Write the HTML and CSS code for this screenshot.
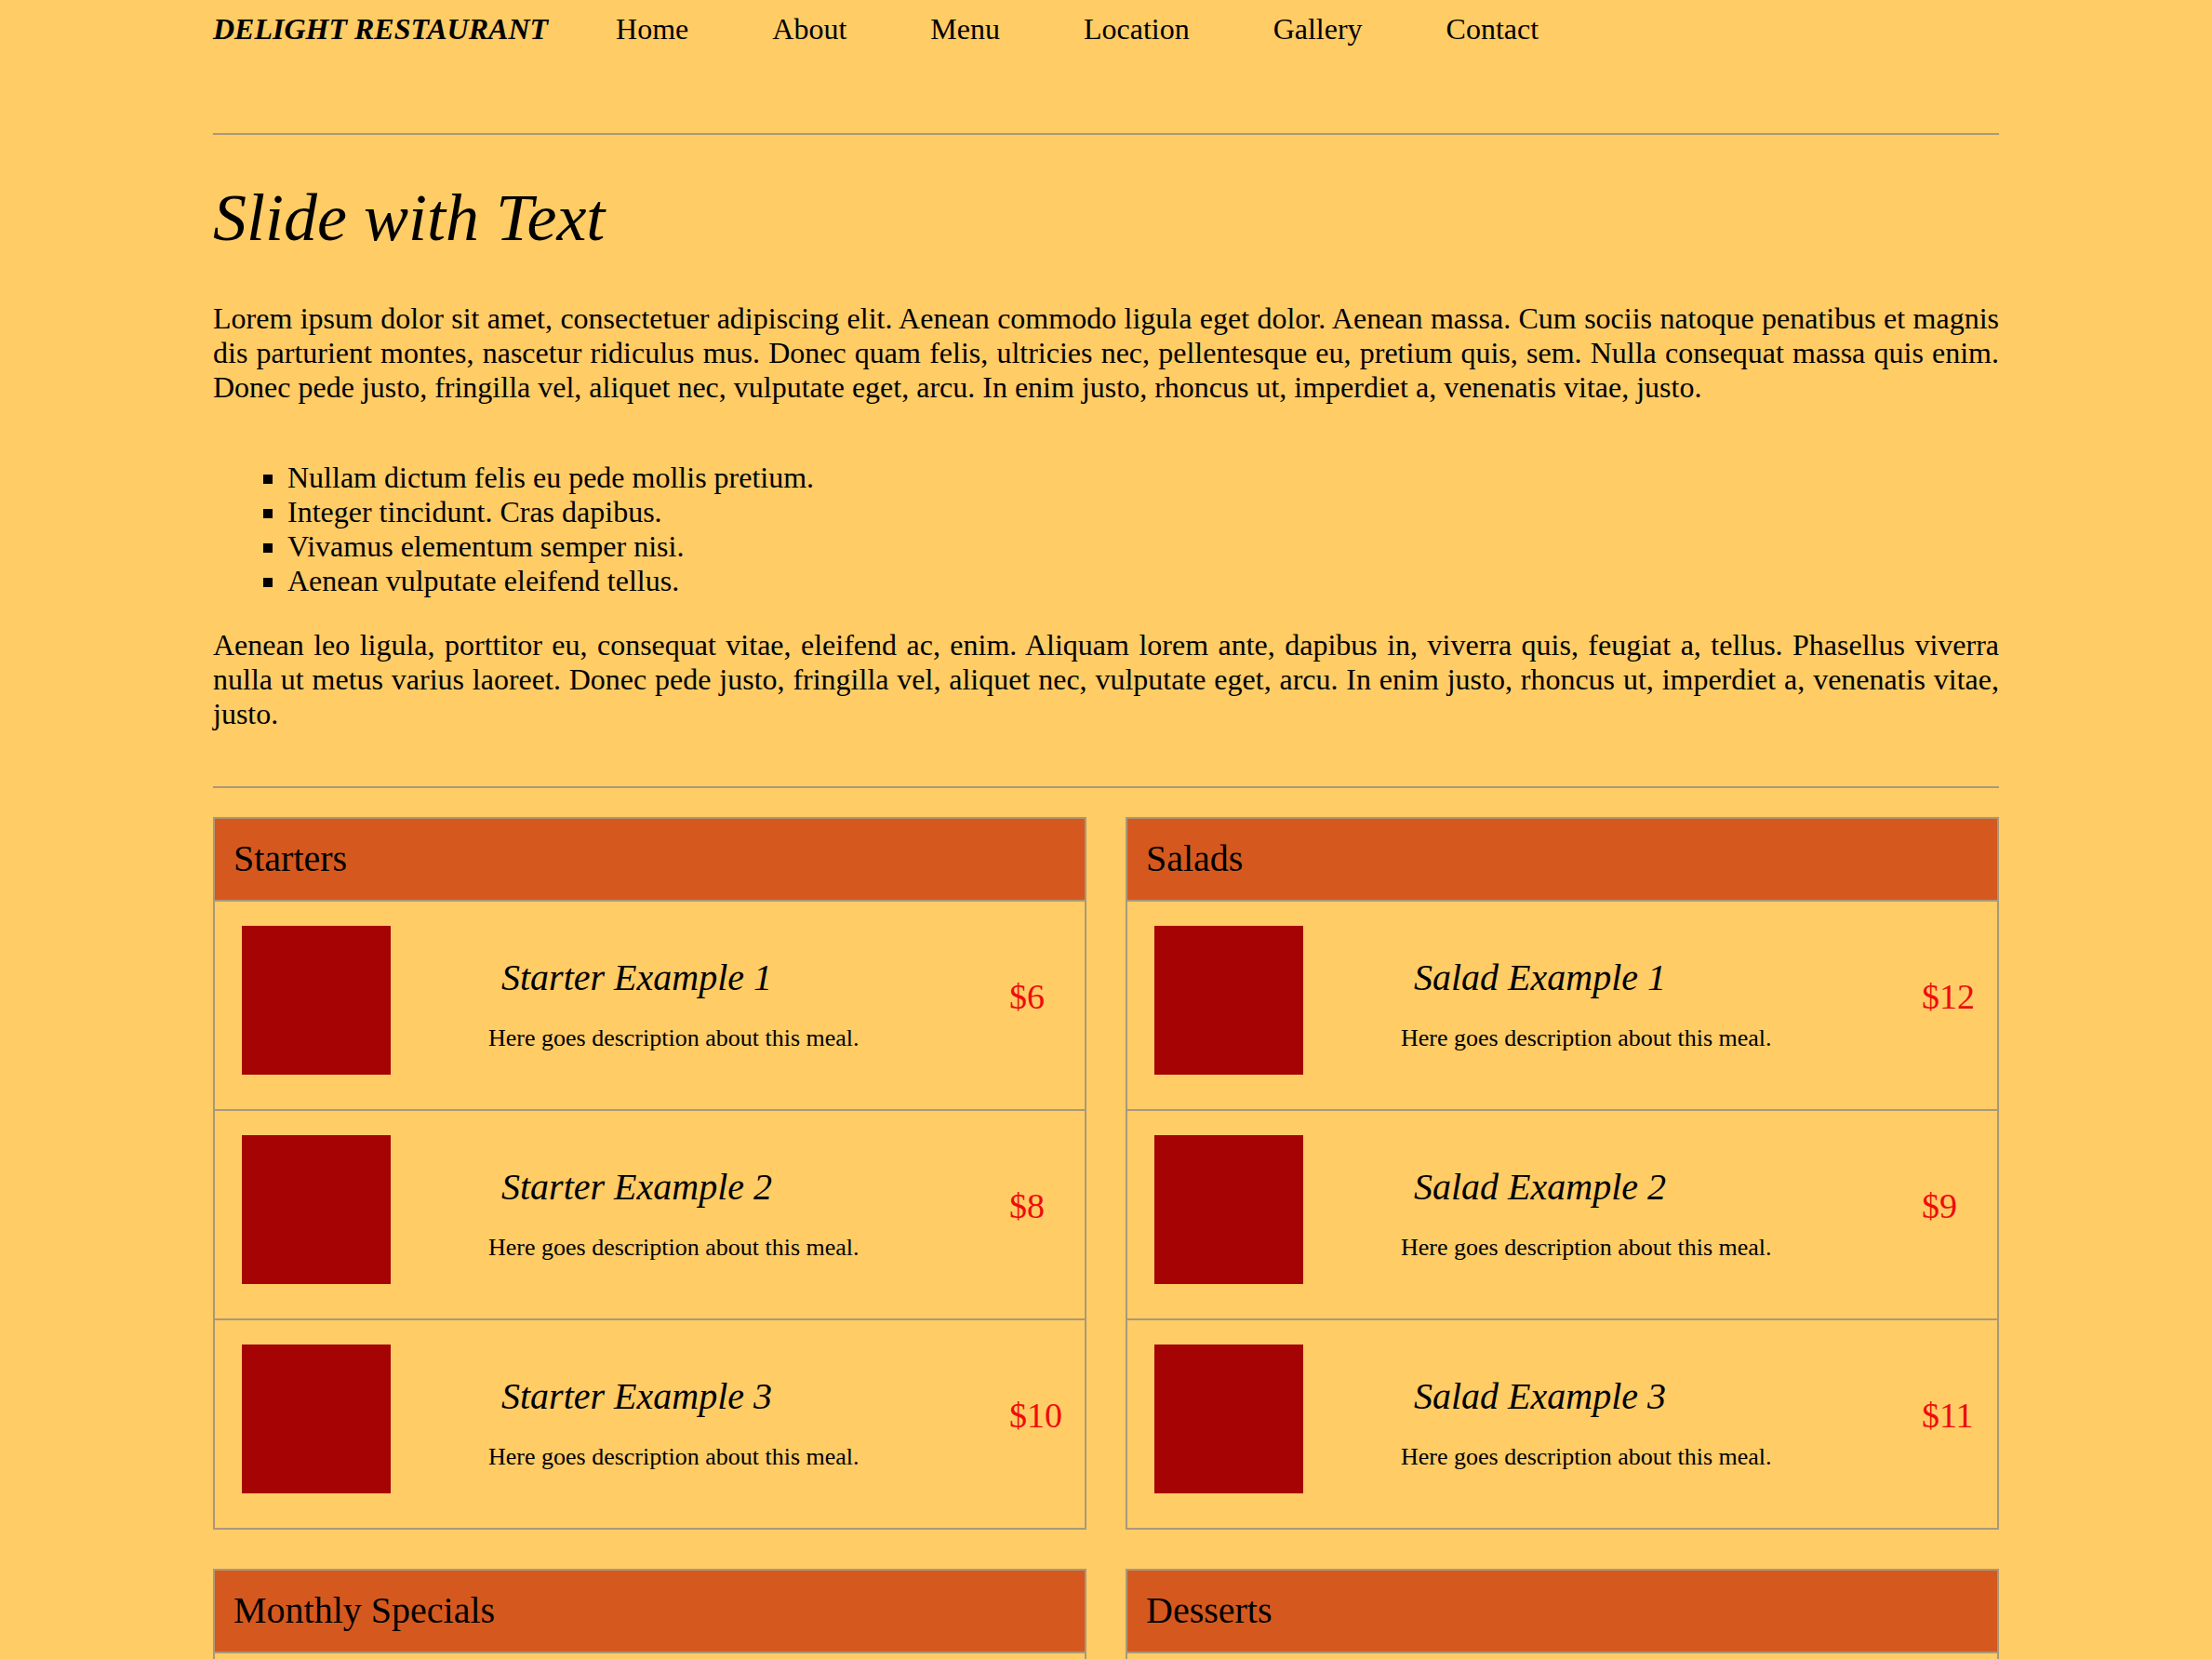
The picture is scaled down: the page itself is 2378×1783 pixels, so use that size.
FILE: index.html
```html
<!DOCTYPE html>
<html lang="en">
<head>
<meta charset="utf-8">
<title>Delight Restaurant</title>
<link rel="stylesheet" href="styles.css">
</head>
<body>
<div class="page">
  <header class="topbar">
    <div class="logo">DELIGHT RESTAURANT</div>
    <nav>
      <ul class="nav">
        <li><a href="#">Home</a></li>
        <li><a href="#">About</a></li>
        <li><a href="#">Menu</a></li>
        <li><a href="#">Location</a></li>
        <li><a href="#">Gallery</a></li>
        <li><a href="#">Contact</a></li>
      </ul>
    </nav>
  </header>
  <div class="rule rule-top"></div>
  <section class="intro">
    <h1>Slide with Text</h1>
    <p>Lorem ipsum dolor sit amet, consectetuer adipiscing elit. Aenean commodo ligula eget dolor. Aenean massa. Cum sociis natoque penatibus et magnis dis parturient montes, nascetur ridiculus mus. Donec quam felis, ultricies nec, pellentesque eu, pretium quis, sem. Nulla consequat massa quis enim. Donec pede justo, fringilla vel, aliquet nec, vulputate eget, arcu. In enim justo, rhoncus ut, imperdiet a, venenatis vitae, justo.</p>
    <ul class="points">
      <li>Nullam dictum felis eu pede mollis pretium.</li>
      <li>Integer tincidunt. Cras dapibus.</li>
      <li>Vivamus elementum semper nisi.</li>
      <li>Aenean vulputate eleifend tellus.</li>
    </ul>
    <p>Aenean leo ligula, porttitor eu, consequat vitae, eleifend ac, enim. Aliquam lorem ante, dapibus in, viverra quis, feugiat a, tellus. Phasellus viverra nulla ut metus varius laoreet. Donec pede justo, fringilla vel, aliquet nec, vulputate eget, arcu. In enim justo, rhoncus ut, imperdiet a, venenatis vitae, justo.</p>
  </section>
  <div class="rule rule-mid"></div>
  <section class="menu-grid">
    <div class="menu-box">
      <h2 class="box-head">Starters</h2>
      <div class="item"><div class="thumb"></div><div class="item-text"><h3>Starter Example 1</h3><p>Here goes description about this meal.</p></div><div class="price">$6</div></div>
      <div class="item"><div class="thumb"></div><div class="item-text"><h3>Starter Example 2</h3><p>Here goes description about this meal.</p></div><div class="price">$8</div></div>
      <div class="item"><div class="thumb"></div><div class="item-text"><h3>Starter Example 3</h3><p>Here goes description about this meal.</p></div><div class="price">$10</div></div>
    </div>
    <div class="menu-box">
      <h2 class="box-head">Salads</h2>
      <div class="item"><div class="thumb"></div><div class="item-text"><h3>Salad Example 1</h3><p>Here goes description about this meal.</p></div><div class="price">$12</div></div>
      <div class="item"><div class="thumb"></div><div class="item-text"><h3>Salad Example 2</h3><p>Here goes description about this meal.</p></div><div class="price">$9</div></div>
      <div class="item"><div class="thumb"></div><div class="item-text"><h3>Salad Example 3</h3><p>Here goes description about this meal.</p></div><div class="price">$11</div></div>
    </div>
    <div class="menu-box">
      <h2 class="box-head">Monthly Specials</h2>
      <div class="item"><div class="thumb"></div><div class="item-text"><h3>Special Example 1</h3><p>Here goes description about this meal.</p></div><div class="price">$15</div></div>
      <div class="item"><div class="thumb"></div><div class="item-text"><h3>Special Example 2</h3><p>Here goes description about this meal.</p></div><div class="price">$18</div></div>
      <div class="item"><div class="thumb"></div><div class="item-text"><h3>Special Example 3</h3><p>Here goes description about this meal.</p></div><div class="price">$14</div></div>
    </div>
    <div class="menu-box">
      <h2 class="box-head">Desserts</h2>
      <div class="item"><div class="thumb"></div><div class="item-text"><h3>Dessert Example 1</h3><p>Here goes description about this meal.</p></div><div class="price">$5</div></div>
      <div class="item"><div class="thumb"></div><div class="item-text"><h3>Dessert Example 2</h3><p>Here goes description about this meal.</p></div><div class="price">$7</div></div>
      <div class="item"><div class="thumb"></div><div class="item-text"><h3>Dessert Example 3</h3><p>Here goes description about this meal.</p></div><div class="price">$6</div></div>
    </div>
  </section>
</div>
</body>
</html>
```
FILE: styles.css
```css
html, body {
  margin: 0;
  padding: 0;
  background: #ffcc66;
}
body {
  font-family: "Liberation Serif", "Times New Roman", serif;
  font-size: 32px;
  color: #000;
}
.page {
  width: 1920px;
  margin: 0 auto;
  padding-bottom: 60px;
}
.topbar {
  display: flex;
  align-items: baseline;
  padding-top: 13px;
}
.logo {
  font-weight: bold;
  font-style: italic;
  margin-right: 73px;
  white-space: nowrap;
}
.nav {
  display: flex;
  gap: 90px;
  list-style: none;
  margin: 0;
  padding: 0;
}
.nav a {
  color: #000;
  text-decoration: none;
}
.rule {
  border-top: 2px solid #a9997a;
}
.rule-top {
  margin-top: 93px;
}
.intro h1 {
  font-size: 72px;
  font-style: italic;
  font-weight: normal;
  margin: 48px 0;
}
.intro p {
  margin: 32px 0;
  text-align: justify;
}
.points {
  list-style: square;
  margin: 60px 0 32px;
  padding-left: 80px;
}
.rule-mid {
  margin-top: 59px;
}
.menu-grid {
  display: grid;
  grid-template-columns: 1fr 1fr;
  gap: 42px;
  margin-top: 31px;
}
.menu-box {
  border: 2px solid #a9997a;
}
.box-head {
  margin: 0;
  background: #d5591f;
  border-bottom: 2px solid #a9997a;
  font-size: 40px;
  font-weight: normal;
  padding: 19px 20px 21px;
}
.item {
  display: grid;
  grid-template-columns: 160px 1fr 81px;
  align-items: start;
  padding: 26px 0 37px 29px;
  border-bottom: 2px solid #a9997a;
}
.item:last-child {
  border-bottom: none;
}
.thumb {
  width: 160px;
  height: 160px;
  background: #a60404;
}
.item-text {
  padding-left: 105px;
}
.item-text h3 {
  font-size: 40px;
  font-style: italic;
  font-weight: normal;
  margin: 32px 0 0;
  padding-left: 14px;
}
.item-text p {
  font-size: 26px;
  margin: 27px 0 0;
}
.price {
  color: #ee0c0c;
  font-size: 38px;
  margin-top: 54px;
}
```
